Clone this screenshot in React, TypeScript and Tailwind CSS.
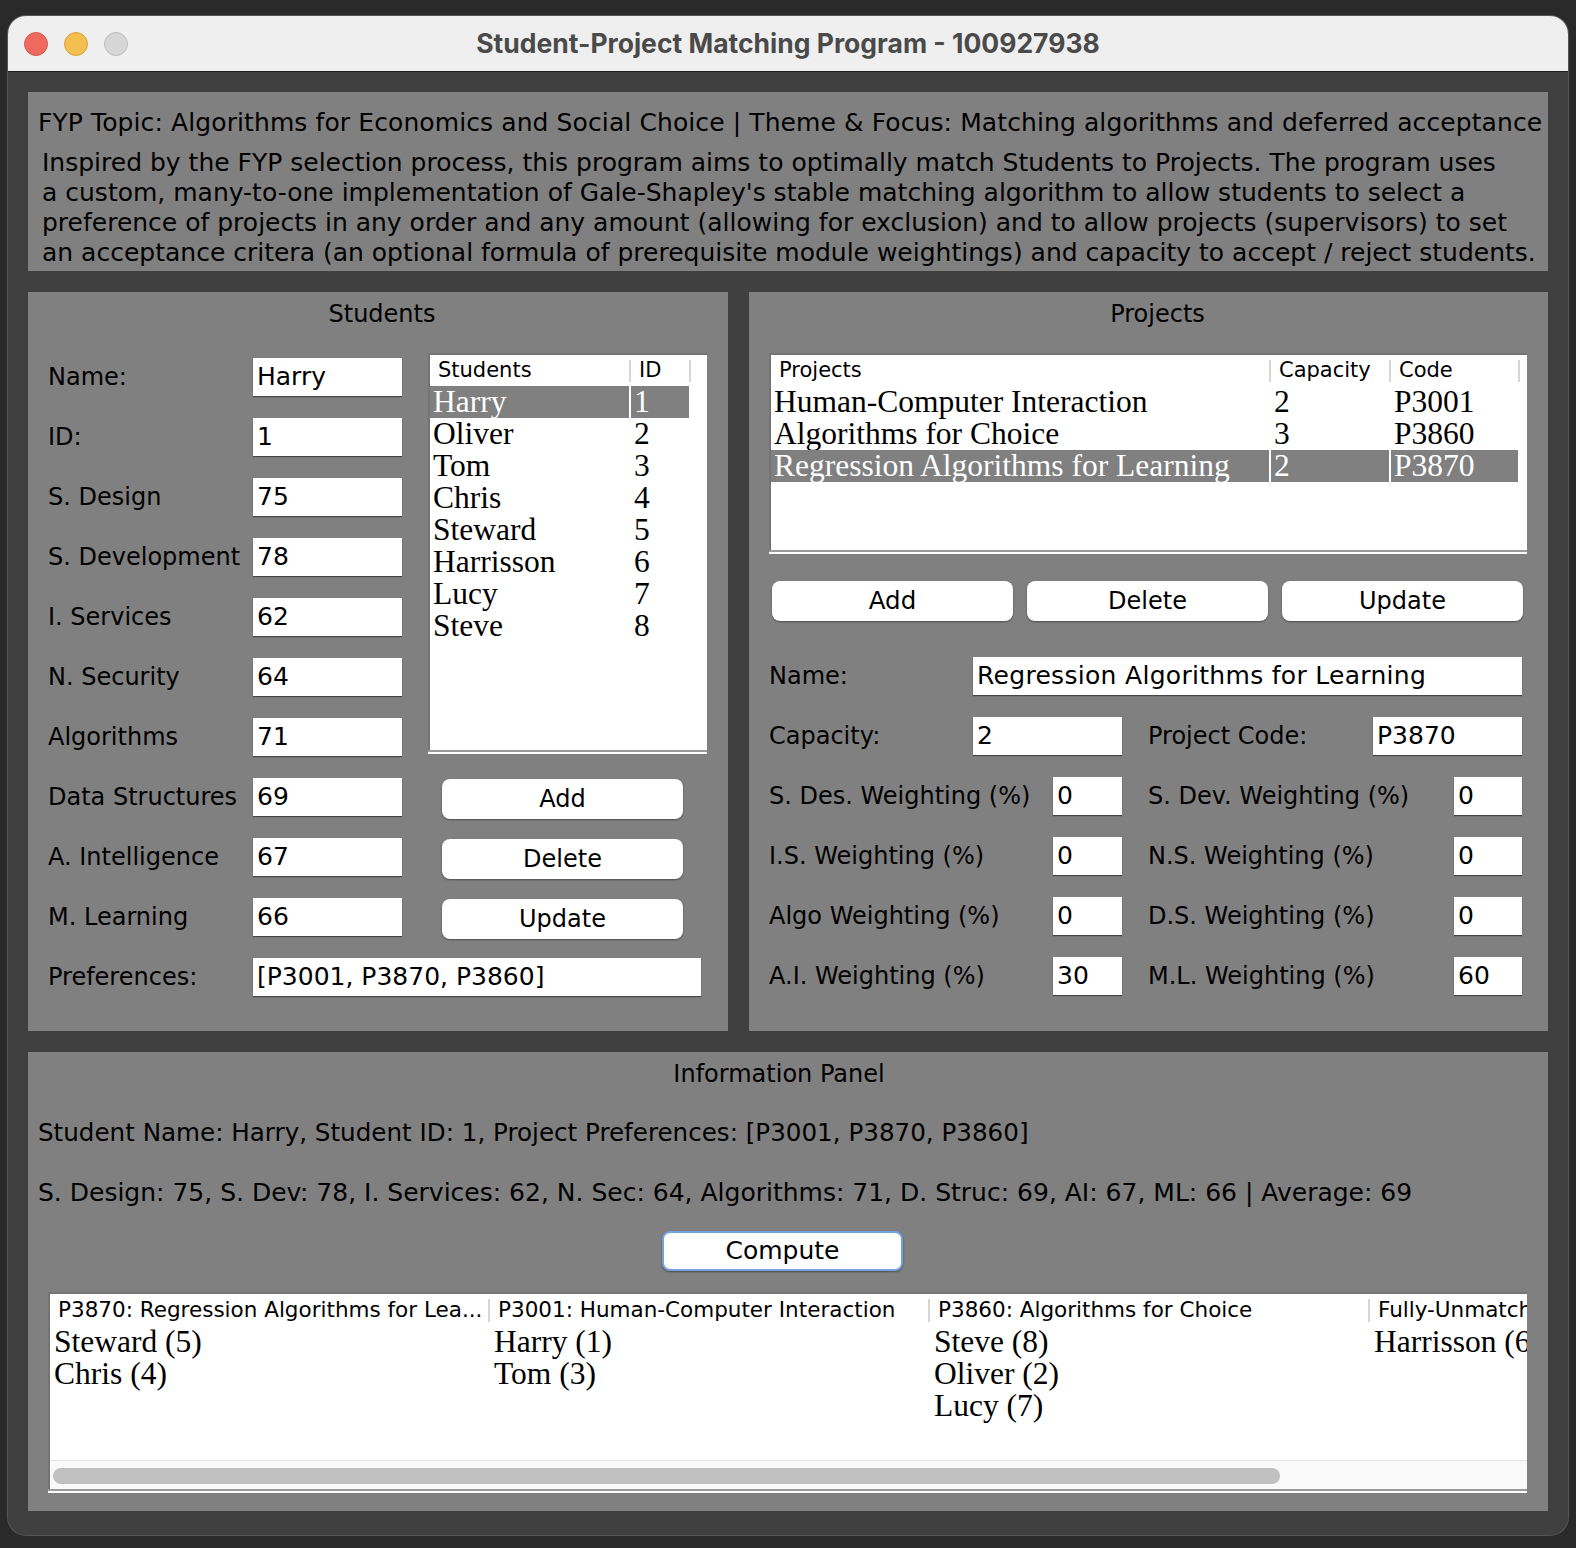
import React from 'react'

const sans = "font-['DejaVu_Sans',sans-serif]"
const serif = "font-['Liberation_Serif',serif]"

type Col = { label: string; width: number }

const students = [
  ['Harry', '1'],
  ['Oliver', '2'],
  ['Tom', '3'],
  ['Chris', '4'],
  ['Steward', '5'],
  ['Harrisson', '6'],
  ['Lucy', '7'],
  ['Steve', '8'],
]

const projects = [
  ['Human-Computer Interaction', '2', 'P3001'],
  ['Algorithms for Choice', '3', 'P3860'],
  ['Regression Algorithms for Learning', '2', 'P3870'],
]

const studentFields = [
  ['Name:', 'Harry'],
  ['ID:', '1'],
  ['S. Design', '75'],
  ['S. Development', '78'],
  ['I. Services', '62'],
  ['N. Security', '64'],
  ['Algorithms', '71'],
  ['Data Structures', '69'],
  ['A. Intelligence', '67'],
  ['M. Learning', '66'],
]

const weightings = [
  ['S. Des. Weighting (%)', '0', 'S. Dev. Weighting (%)', '0'],
  ['I.S. Weighting (%)', '0', 'N.S. Weighting (%)', '0'],
  ['Algo Weighting (%)', '0', 'D.S. Weighting (%)', '0'],
  ['A.I. Weighting (%)', '30', 'M.L. Weighting (%)', '60'],
]

const results = [
  { head: 'P3870: Regression Algorithms for Lea...', rows: ['Steward (5)', 'Chris (4)'] },
  { head: 'P3001: Human-Computer Interaction', rows: ['Harry (1)', 'Tom (3)'] },
  { head: 'P3860: Algorithms for Choice', rows: ['Steve (8)', 'Oliver (2)', 'Lucy (7)'] },
  { head: 'Fully-Unmatched Students', rows: ['Harrisson (6)'] },
]

function Field({ value, className = '' }: { value: string; className?: string }) {
  return (
    <div
      className={`h-[38px] bg-white flex items-center pl-[4px] text-[25px] text-black whitespace-nowrap shadow-[0_1px_1px_rgba(0,0,0,0.45)] ${className}`}
    >
      {value}
    </div>
  )
}

function Label({ text, className = '' }: { text: string; className?: string }) {
  return <div className={`flex items-center text-[24px] text-black whitespace-nowrap ${className}`}>{text}</div>
}

function Button({ label, className = '' }: { label: string; className?: string }) {
  return (
    <button
      className={`h-[40px] w-[241px] bg-white rounded-[8px] flex items-center justify-center text-black shadow-[0_1px_2px_rgba(0,0,0,0.4)] ${className}`}
    >
      {label}
    </button>
  )
}

function HeaderCell({ label, width, size = 'text-[21px]' }: Col & { size?: string }) {
  return (
    <div style={{ width }} className={`relative shrink-0 h-full flex items-center pl-[8px] text-black whitespace-nowrap ${size}`}>
      {label}
      <div className="absolute right-0 top-[5px] bottom-[4px] w-[2px] bg-[#d6d6d6]" />
    </div>
  )
}

function Table({ cols, rows, selected, className = '' }: { cols: Col[]; rows: string[][]; selected: number; className?: string }) {
  return (
    <div className={`bg-white border-t-2 border-l-2 border-[#747474] shadow-[0_2px_0_#9a9a9a,0_4px_0_#ffffff] overflow-hidden ${className}`}>
      <div className="flex h-[31px]">
        {cols.map((c) => (
          <HeaderCell key={c.label} {...c} />
        ))}
      </div>
      {rows.map((r, ri) => (
        <div key={ri} className="flex h-[32px]">
          {r.map((cell, ci) => (
            <div
              key={ci}
              style={{ width: cols[ci].width }}
              className={`shrink-0 flex items-center pl-[3px] border-r-2 border-white text-[31.5px] leading-[32px] whitespace-nowrap ${serif} ${
                ri === selected ? 'bg-[#808080] text-white' : 'text-black'
              }`}
            >
              {cell}
            </div>
          ))}
        </div>
      ))}
    </div>
  )
}

function PanelTitle({ text, className = '' }: { text: string; className?: string }) {
  return <div className={`h-[40px] pt-[4px] flex items-center justify-center text-[24px] text-black ${className}`}>{text}</div>
}

function StudentsPanel() {
  return (
    <div className="w-[700px] bg-[#808080] flex flex-col">
      <PanelTitle text="Students" className="pl-[8px]" />
      <div className="mt-[15px] pl-[20px] grid grid-cols-[205px_149px_26px_279px] grid-rows-[repeat(11,60px)]">
        <Table
          className="col-start-4 row-start-1 row-span-7 self-start mt-[6px] h-[397px]"
          cols={[
            { label: 'Students', width: 201 },
            { label: 'ID', width: 60 },
          ]}
          rows={students}
          selected={0}
        />
        <Button label="Add" className="col-start-4 row-start-8 self-center mt-[4px] ml-[14px] text-[24px]" />
        <Button label="Delete" className="col-start-4 row-start-9 self-center mt-[4px] ml-[14px] text-[24px]" />
        <Button label="Update" className="col-start-4 row-start-10 self-center mt-[4px] ml-[14px] text-[24px]" />
        {studentFields.map(([l, v]) => (
          <React.Fragment key={l}>
            <Label text={l} className="col-start-1" />
            <Field value={v} className="col-start-2 self-center" />
          </React.Fragment>
        ))}
        <Label text="Preferences:" className="col-start-1 row-start-11" />
        <Field value="[P3001, P3870, P3860]" className="col-start-2 col-span-3 row-start-11 self-center w-[448px]" />
      </div>
    </div>
  )
}

function ProjectsPanel() {
  return (
    <div className="w-[799px] bg-[#808080] flex flex-col">
      <PanelTitle text="Projects" className="pl-[18px]" />
      <Table
        className="mt-[21px] ml-[20px] w-[758px] h-[197px]"
        cols={[
          { label: 'Projects', width: 500 },
          { label: 'Capacity', width: 120 },
          { label: 'Code', width: 129 },
        ]}
        rows={projects}
        selected={2}
      />
      <div className="mt-[31px] ml-[23px] flex gap-[14px]">
        <Button label="Add" className="text-[24.5px]" />
        <Button label="Delete" className="text-[24px]" />
        <Button label="Update" className="text-[24px]" />
      </div>
      <div className="mt-[25px] pl-[20px] grid grid-cols-[204px_149px_26px_225px_149px] grid-rows-[repeat(6,60px)]">
        <Label text="Name:" className="col-start-1" />
        <Field value="Regression Algorithms for Learning" className="col-start-2 col-span-4 self-center tracking-[0.3px]" />
        <Label text="Capacity:" className="col-start-1" />
        <Field value="2" className="col-start-2 self-center" />
        <Label text="Project Code:" className="col-start-4" />
        <Field value="P3870" className="col-start-5 self-center" />
        {weightings.map(([l1, v1, l2, v2]) => (
          <React.Fragment key={l1}>
            <Label text={l1} className="col-start-1" />
            <Field value={v1} className="col-start-2 self-center justify-self-end w-[69px]" />
            <Label text={l2} className="col-start-4" />
            <Field value={v2} className="col-start-5 self-center justify-self-end w-[68px]" />
          </React.Fragment>
        ))}
      </div>
    </div>
  )
}

function InfoPanel() {
  return (
    <div className="h-[459px] bg-[#808080] flex flex-col">
      <PanelTitle text="Information Panel" className="pr-[18px]" />
      <div className="mt-[11px] h-[60px] flex items-center pl-[10px] text-[24.6px] text-black whitespace-nowrap">
        Student Name: Harry, Student ID: 1, Project Preferences: [P3001, P3870, P3860]
      </div>
      <div className="h-[60px] flex items-center pl-[10px] text-[25px] text-black whitespace-nowrap">
        S. Design: 75, S. Dev: 78, I. Services: 62, N. Sec: 64, Algorithms: 71, D. Struc: 69, AI: 67, ML: 66 | Average: 69
      </div>
      <Button label="Compute" className="mt-[8px] ml-[634px] border-2 border-[#72a3df] text-[25px]" />
      <div className="mt-[21px] ml-[20px] w-[1479px] h-[197px] bg-white border-t-2 border-l-2 border-[#747474] shadow-[0_2px_0_#9a9a9a,0_4px_0_#ffffff] flex flex-col overflow-hidden">
        <div className="flex-1 flex">
          {results.map((c) => (
            <div key={c.head} className="w-[440px] shrink-0 flex flex-col">
              <div className="h-[32px] flex">
                <HeaderCell label={c.head} width={440} size="text-[21.5px]" />
              </div>
              {c.rows.map((r) => (
                <div key={r} className={`h-[32px] pl-[4px] flex items-center text-[31.5px] leading-[32px] text-black whitespace-nowrap ${serif}`}>
                  {r}
                </div>
              ))}
            </div>
          ))}
        </div>
        <div className="h-[29px] shrink-0 border-t border-[#e4e4e4] bg-[#f9f9f9] pt-[7px] pl-[3px]">
          <div className="w-[1227px] h-[16px] rounded-full bg-[#c1c1c1]" />
        </div>
      </div>
    </div>
  )
}

export default function App() {
  return (
    <div className={`w-[1576px] h-[1548px] bg-[#2a2a2a] pt-[16px] pl-[8px] ${sans}`}>
      <div className="w-[1560px] h-[1519px] rounded-[18px] bg-[#404040] overflow-hidden flex flex-col shadow-[0_0_0_1px_#555555]">
        <div className="h-[56px] shrink-0 bg-[#efefef] border-b border-[#1c1c1c] grid grid-cols-[1fr_auto_1fr] items-center">
          <div className="flex gap-[16px] pl-[16px]">
            <span className="w-[24px] h-[24px] rounded-full bg-[#ee6a5f] border border-[#d5574b]" />
            <span className="w-[24px] h-[24px] rounded-full bg-[#f5bf4f] border border-[#d8a443]" />
            <span className="w-[24px] h-[24px] rounded-full bg-[#d6d6d6] border border-[#bdbdbd]" />
          </div>
          <div className="font-['Inter',sans-serif] font-bold text-[26.5px] text-[#4a4a4a] whitespace-nowrap">
            Student-Project Matching Program - 100927938
          </div>
          <div />
        </div>
        <div className="flex-1 pt-[20px] px-[20px] pb-[24px] flex flex-col gap-[21px]">
          <div className="h-[179px] bg-[#808080] pt-[16px] text-[25px] text-black whitespace-nowrap">
            <div className="h-[30px] pl-[10px] flex items-center tracking-[0.1px]">
              FYP Topic: Algorithms for Economics and Social Choice | Theme &amp; Focus: Matching algorithms and deferred acceptance
            </div>
            <div className="mt-[10px] pl-[14px] leading-[30px]">
              <div>Inspired by the FYP selection process, this program aims to optimally match Students to Projects. The program uses</div>
              <div>a custom, many-to-one implementation of Gale-Shapley's stable matching algorithm to allow students to select a</div>
              <div>preference of projects in any order and any amount (allowing for exclusion) and to allow projects (supervisors) to set</div>
              <div>an acceptance critera (an optional formula of prerequisite module weightings) and capacity to accept / reject students.</div>
            </div>
          </div>
          <div className="h-[739px] flex gap-[21px]">
            <StudentsPanel />
            <ProjectsPanel />
          </div>
          <InfoPanel />
        </div>
      </div>
    </div>
  )
}
